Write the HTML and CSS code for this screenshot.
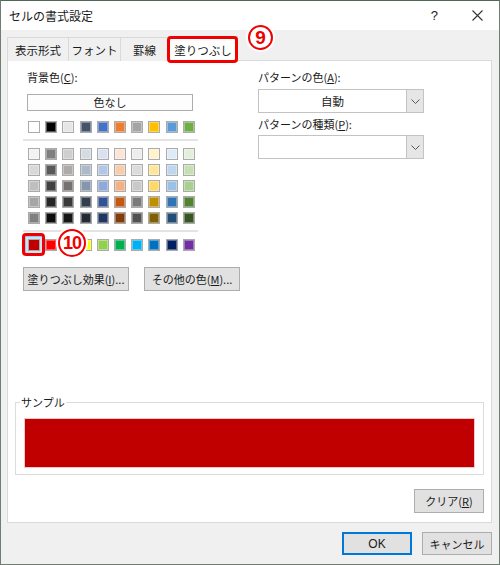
FILE: index.html
```html
<!DOCTYPE html>
<html lang="ja">
<head>
<meta charset="utf-8">
<link rel="stylesheet" href="styles.css">
</head>
<body>
<div class="window">
  <div class="titlebar">
    <span class="title">セルの書式設定</span>
    <span class="help">?</span>
    <svg class="close" width="11" height="11" viewBox="0 0 11 11"><path d="M0.5 0.5 L10.5 10.5 M10.5 0.5 L0.5 10.5" stroke="#333" stroke-width="1.1" fill="none"/></svg>
  </div>
  <div class="content">
    <div class="tabs">
      <div class="tab t1">表示形式</div>
      <div class="tab t2">フォント</div>
      <div class="tab t3">罫線</div>
      <div class="tab t4 active">塗りつぶし</div>
    </div>
    <div class="panel">
      <div class="top">
        <div class="leftcol">
          <div class="label">背景色(<u>C</u>):</div>
          <div class="nocolor">色なし</div>
          <div class="row theme">
            <i style="background:#ffffff"></i><i style="background:#000000"></i><i style="background:#e7e6e6"></i><i style="background:#44546a"></i><i style="background:#4472c4"></i><i style="background:#ed7d31"></i><i style="background:#a5a5a5"></i><i style="background:#ffc000"></i><i style="background:#5b9bd5"></i><i style="background:#70ad47"></i>
          </div>
          <div class="sep"></div>
          <div class="tints">
            <i style="background:#f2f2f2"></i><i style="background:#7f7f7f"></i><i style="background:#d0cece"></i><i style="background:#d6dce4"></i><i style="background:#d9e1f2"></i><i style="background:#fce4d6"></i><i style="background:#ededed"></i><i style="background:#fff2cc"></i><i style="background:#ddebf7"></i><i style="background:#e2efda"></i>
            <i style="background:#d9d9d9"></i><i style="background:#595959"></i><i style="background:#aeaaaa"></i><i style="background:#acb9ca"></i><i style="background:#b4c6e7"></i><i style="background:#f8cbad"></i><i style="background:#dbdbdb"></i><i style="background:#ffe699"></i><i style="background:#bdd7ee"></i><i style="background:#c6e0b4"></i>
            <i style="background:#bfbfbf"></i><i style="background:#404040"></i><i style="background:#757171"></i><i style="background:#8497b0"></i><i style="background:#8ea9db"></i><i style="background:#f4b084"></i><i style="background:#c9c9c9"></i><i style="background:#ffd966"></i><i style="background:#9bc2e6"></i><i style="background:#a9d08e"></i>
            <i style="background:#a6a6a6"></i><i style="background:#262626"></i><i style="background:#3a3838"></i><i style="background:#333f4f"></i><i style="background:#305496"></i><i style="background:#c65911"></i><i style="background:#7b7b7b"></i><i style="background:#bf8f00"></i><i style="background:#2f75b5"></i><i style="background:#548235"></i>
            <i style="background:#808080"></i><i style="background:#0d0d0d"></i><i style="background:#171616"></i><i style="background:#222b35"></i><i style="background:#203764"></i><i style="background:#833c0c"></i><i style="background:#525252"></i><i style="background:#806000"></i><i style="background:#1f4e78"></i><i style="background:#375623"></i>
          </div>
          <div class="sep"></div>
          <div class="row standard">
            <i class="selected" style="background:#c00000"></i><i style="background:#ff0000"></i><i style="background:#ffc000"></i><i style="background:#ffff00"></i><i style="background:#92d050"></i><i style="background:#00b050"></i><i style="background:#00b0f0"></i><i style="background:#0070c0"></i><i style="background:#002060"></i><i style="background:#7030a0"></i>
          </div>
          <div class="btnrow">
            <div class="btn effect">塗りつぶし効果(<u>I</u>)...</div>
            <div class="btn more">その他の色(<u>M</u>)...</div>
          </div>
        </div>
        <div class="rightcol">
          <div class="label">パターンの色(<u>A</u>):</div>
          <div class="select">
            <span class="val">自動</span>
            <span class="drop"><svg width="9" height="5" viewBox="0 0 9 5"><path d="M0.5 0.5 L4.5 4.5 L8.5 0.5" stroke="#555" stroke-width="1" fill="none"/></svg></span>
          </div>
          <div class="label label2">パターンの種類(<u>P</u>):</div>
          <div class="select">
            <span class="val"></span>
            <span class="drop"><svg width="9" height="5" viewBox="0 0 9 5"><path d="M0.5 0.5 L4.5 4.5 L8.5 0.5" stroke="#555" stroke-width="1" fill="none"/></svg></span>
          </div>
        </div>
      </div>
      <fieldset class="sample">
        <legend>サンプル</legend>
        <div class="fill"></div>
      </fieldset>
      <div class="clearrow"><div class="btn clear">クリア(<u>R</u>)</div></div>
    </div>
    <div class="footer">
      <div class="btn ok">OK</div>
      <div class="btn cancel">キャンセル</div>
    </div>
  </div>
  <div class="mark-tab"></div>
  <div class="num num9">9</div>
  <div class="mark-swatch"></div>
  <div class="num num10">10</div>
</div>
</body>
</html>
```

FILE: styles.css
```css
html, body {
  margin: 0;
  padding: 0;
}
body {
  width: 500px;
  height: 565px;
  font-family: "Noto Sans CJK JP", "Noto Sans", sans-serif;
  font-size: 11px;
  color: #1a1a1a;
}
.window {
  position: relative;
  box-sizing: border-box;
  width: 500px;
  height: 565px;
  border: 1px solid #6f7d73;
  border-top-color: #4e6a55;
  background: #f0f0f0;
  display: flex;
  flex-direction: column;
}
.titlebar {
  height: 29px;
  background: #fff;
  display: flex;
  align-items: center;
  padding-left: 8px;
  flex-shrink: 0;
}
.title {
  font-size: 12px;
  flex: 1;
}
.help {
  font-family: "Liberation Sans", sans-serif;
  font-size: 13px;
  margin-right: 34px;
}
.close {
  margin-right: 16px;
}
.content {
  padding: 0 7px 0 6px;
  display: flex;
  flex-direction: column;
}
.tabs {
  display: flex;
  align-items: flex-end;
  margin-top: 6px;
  height: 25px;
  position: relative;
  z-index: 1;
  margin-bottom: -1px;
}
.tab {
  box-sizing: border-box;
  height: 24px;
  border: 1px solid #d9d9d9;
  border-bottom: none;
  display: flex;
  align-items: center;
  justify-content: center;
  margin-right: -1px;
  background: #f0f0f0;
  font-size: 11.5px;
}
.t1 { width: 62px; }
.t2 { width: 53px; }
.t3 { width: 49px; }
.t4 { width: 70px; }
.tab.active {
  height: 26px;
  background: #fff;
  margin-bottom: -1px;
}
.panel {
  box-sizing: border-box;
  height: 463px;
  border: 1px solid #d9d9d9;
  background: #fff;
  padding: 8px 7px 9px 7px;
  display: flex;
  flex-direction: column;
}
.top {
  display: flex;
  padding-left: 8px;
}
.leftcol {
  width: 175px;
  flex-shrink: 0;
}
.label {
  height: 16px;
  line-height: 16px;
  padding-left: 4px;
  white-space: nowrap;
}
.nocolor {
  box-sizing: border-box;
  margin: 9px 0 0 4px;
  width: 166px;
  height: 17px;
  border: 1px solid #adadad;
  background: #fdfdfd;
  text-align: center;
  line-height: 15px;
}
.row, .tints {
  display: grid;
  grid-template-columns: repeat(10, 12px);
  column-gap: 5.2px;
  padding-left: 5px;
}
.tints {
  row-gap: 4px;
  margin-top: 7px;
}
.row.theme { margin-top: 10px; }
.row.standard { margin-top: 7px; }
.row i, .tints i {
  display: block;
  box-sizing: border-box;
  width: 12px;
  height: 12px;
  border: 1px solid #ababab;
  box-shadow: inset 0 0 0 1px rgba(255,255,255,0.35);
}
.row i.selected {
  box-shadow: 0 0 0 2px #cce4f7, 0 0 0 3px #99c9ef;
}
.sep {
  height: 2px;
  background: #e3e3e3;
  margin-top: 6px;
}
.btnrow {
  display: flex;
  gap: 15px;
  margin-top: 16px;
  width: 230px;
}
.btn {
  box-sizing: border-box;
  height: 24px;
  border: 1px solid #adadad;
  background: #e1e1e1;
  display: flex;
  align-items: center;
  justify-content: center;
  white-space: nowrap;
  flex-shrink: 0;
}
.effect { width: 106px; }
.more { width: 96px; }
.rightcol {
  margin-left: 60px;
  width: 166px;
}
.rightcol .label { padding-left: 0; }
.label2 { margin-top: 3px; }
.select {
  box-sizing: border-box;
  height: 24px;
  margin-top: 4px;
  border: 1px solid #c3c3c3;
  display: flex;
  background: #fff;
}
.label2 + .select { margin-top: 3px; }
.val {
  flex: 1;
  display: flex;
  align-items: center;
  justify-content: center;
  font-size: 11.5px;
}
.drop {
  width: 16px;
  background: #e6e6e6;
  border-left: 1px solid #c3c3c3;
  display: flex;
  align-items: center;
  justify-content: center;
}
.sample {
  margin: auto 0 0 0;
  border: 1px solid #dcdcdc;
  padding: 9px 9px 7px 9px;
  min-width: 0;
}
.sample legend {
  padding: 0 1px;
  margin-left: -5px;
  line-height: 16px;
}
.fill {
  height: 48px;
  background: #c00000;
  outline: 1px solid #f2c9c9;
}
.clearrow {
  display: flex;
  justify-content: flex-end;
  margin-top: 14px;
}
.clear { width: 70px; }
.footer {
  display: flex;
  justify-content: flex-end;
  gap: 10px;
  margin-top: 9px;
}
.footer .btn {
  width: 70px;
  height: 23px;
}
.ok {
  border-color: #0078d7 !important;
  box-shadow: inset 0 0 0 1px #0078d7;
  font-family: "Liberation Sans", sans-serif;
  font-size: 12px;
}
.mark-tab {
  position: absolute;
  left: 166px;
  top: 35px;
  width: 71px;
  height: 27px;
  box-sizing: border-box;
  border: 3px solid #f00000;
  border-radius: 4px;
  z-index: 2;
}
.mark-swatch {
  position: absolute;
  left: 21px;
  top: 232px;
  width: 23px;
  height: 23px;
  box-sizing: border-box;
  border: 3px solid #f00000;
  border-radius: 4px;
}
.num {
  position: absolute;
  box-sizing: border-box;
  border: 2px solid #f00000;
  border-radius: 50%;
  background: #fff;
  box-shadow: 0 0 0 2px #fff;
  color: #f00000;
  font-family: "Liberation Sans", sans-serif;
  font-weight: bold;
  display: flex;
  align-items: center;
  justify-content: center;
  z-index: 3;
}
.num9 {
  left: 247px;
  top: 24px;
  width: 25px;
  height: 25px;
  font-size: 19px;
}
.num10 {
  left: 57px;
  top: 228px;
  width: 28px;
  height: 28px;
  font-size: 18px;
  letter-spacing: -1px;
}
```
